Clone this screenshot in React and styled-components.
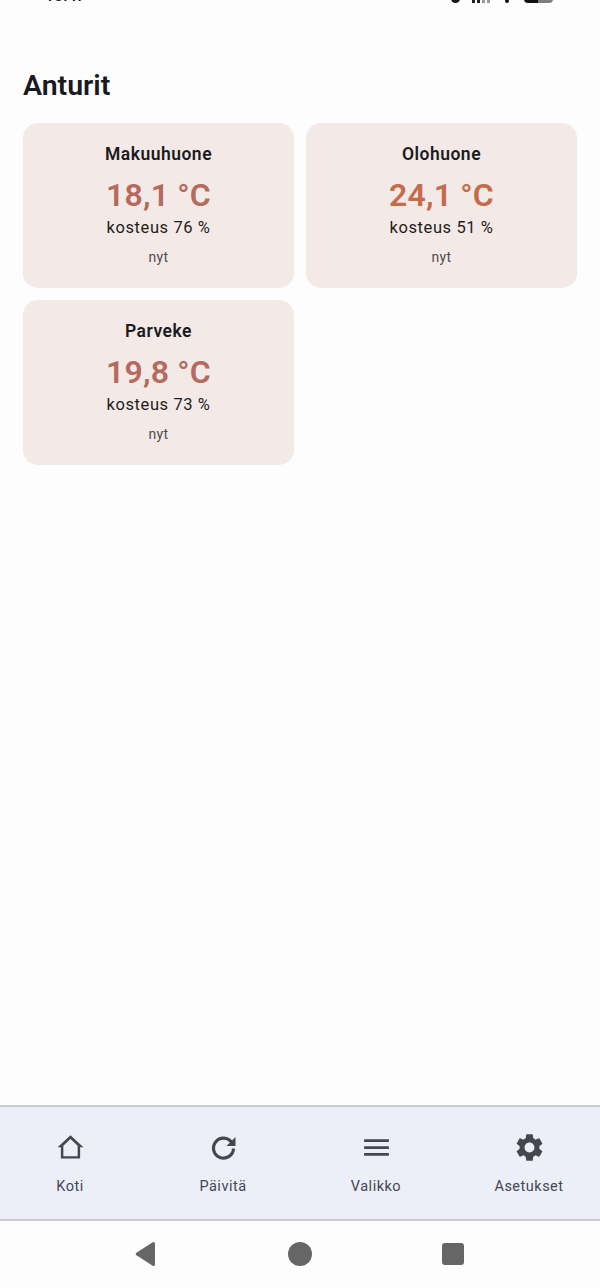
import React from "react";
import styled, { createGlobalStyle } from "styled-components";
import { MdMenu, MdSettings } from "react-icons/md";

const Global = createGlobalStyle`
  html, body { margin: 0; padding: 0; background: #fdfdfe; }
  body { font-family: Roboto, "Liberation Sans", sans-serif; }
`;

const Screen = styled.div`
  width: 600px;
  height: 1288px;
  display: flex;
  flex-direction: column;
  overflow: hidden;
  background: #fdfdfe;
`;

const StatusBar = styled.div`
  height: 3px;
  flex: none;
  overflow: hidden;
  display: flex;
  align-items: flex-end;
  padding: 0 47px 0 45px;
`;

const Clock = styled.span`
  font-size: 16px;
  line-height: 16px;
  font-weight: 500;
  margin-bottom: -1px;
  color: #111;
  margin-right: auto;
`;

const StatusIcons = styled.div`
  display: flex;
  align-items: flex-end;
`;

const Dot = styled.i`
  display: block;
  width: ${(p) => p.$size}px;
  height: ${(p) => p.$size}px;
  border-radius: 50%;
  background: #111;
  margin-right: ${(p) => p.$gap}px;
`;

const Signal = styled.div`
  display: flex;
  gap: 2px;
  margin-right: 15px;
`;

const SignalBar = styled.i`
  display: block;
  width: 3px;
  height: 10px;
  background: ${(p) => (p.$dim ? "#9a9a9a" : "#222")};
`;

const Battery = styled.div`
  width: 29px;
  height: 12px;
  border-radius: 4px;
  background: linear-gradient(90deg, #111 0 14px, #7d7d7d 14px);
`;

const Main = styled.main`
  flex: 1;
  padding: 0 23px;
`;

const Heading = styled.h1`
  margin: 0;
  padding-top: 65px;
  font-size: 28.5px;
  line-height: 36px;
  font-weight: 600;
  color: #181a1f;
`;

const Grid = styled.div`
  display: grid;
  grid-template-columns: 271px 271px;
  grid-auto-rows: 165px;
  gap: 12px;
  margin-top: 19px;
`;

const Card = styled.section`
  background: #f3e9e7;
  border-radius: 15px;
  display: flex;
  flex-direction: column;
  align-items: center;
  padding-top: 20px;
  box-sizing: border-box;
`;

const Room = styled.h2`
  margin: 0;
  font-size: 17.5px;
  line-height: 22px;
  font-weight: 600;
  letter-spacing: 0.5px;
  color: #1b1b1d;
`;

const Temp = styled.div`
  margin-top: 10px;
  font-size: 32px;
  line-height: 40px;
  font-weight: 600;
  letter-spacing: 0.2px;
  color: ${(p) => p.$color};
`;

const Humidity = styled.div`
  margin-top: 2px;
  font-size: 16.5px;
  line-height: 22px;
  letter-spacing: 0.6px;
  color: #1f1c1c;
`;

const Updated = styled.div`
  margin-top: 8px;
  font-size: 14px;
  line-height: 20px;
  letter-spacing: 0.4px;
  color: #524c4c;
`;

const Nav = styled.nav`
  flex: none;
  height: 112px;
  background: #eceef8;
  border-top: 2px solid #c9c9cf;
  border-bottom: 2px solid #c9c9cf;
  display: grid;
  grid-template-columns: 140px 166px 140px 154px;
`;

const NavItem = styled.div`
  display: flex;
  flex-direction: column;
  align-items: center;
  color: #444652;
  padding-top: 24px;

  &:last-child {
    padding-left: 12px;
  }
`;

const IconSlot = styled.div`
  width: 33px;
  height: 33px;
  display: flex;
  align-items: center;
  justify-content: center;
  font-size: 33px;
`;

const NavLabel = styled.span`
  margin-top: 13px;
  font-size: 14.5px;
  line-height: 20px;
  font-weight: 400;
  letter-spacing: 0.5px;
`;

const SystemBar = styled.div`
  flex: none;
  height: 67px;
  box-sizing: border-box;
  display: flex;
  align-items: center;
  justify-content: center;
  gap: 130px;
  color: #666;
  padding: 0 3px 1px 0;
`;

const SysCircle = styled.i`
  display: block;
  width: 24px;
  height: 24px;
  border-radius: 50%;
  background: #666;
`;

const SysSquare = styled.i`
  display: block;
  width: 22px;
  height: 22px;
  border-radius: 3px;
  background: #666;
`;

const HomeIcon = () => (
  <svg width="33" height="33" viewBox="0 0 24 24" fill="currentColor">
    <path fillRule="evenodd" d="M12 3 2.600 11.800H5V20h14v-8.200h2.400L12 3zm0 2.800 5.200 4.900v7.600H6.800v-7.600L12 5.800z" />
  </svg>
);

const RefreshIcon = () => (
  <svg width="33" height="33" viewBox="0 0 33 33" fill="none">
    <path d="M24.800 11.500A10 10 0 1 0 26.500 17.500" stroke="currentColor" strokeWidth="3.200" />
    <path d="M28.500 6v9h-9z" fill="currentColor" />
  </svg>
);

const BackIcon = () => (
  <svg width="24" height="26" viewBox="0 0 24 26" fill="currentColor">
    <path d="M21 2.500v21a1.500 1.500 0 0 1-2.300 1.200L2.500 14.200a1.500 1.500 0 0 1 0-2.400L18.700 1.300A1.500 1.500 0 0 1 21 2.500z" />
  </svg>
);

const sensors = [
  { room: "Makuuhuone", temp: "18,1 °C", humidity: 76, color: "#b56a5d" },
  { room: "Olohuone", temp: "24,1 °C", humidity: 51, color: "#c46b4b" },
  { room: "Parveke", temp: "19,8 °C", humidity: 73, color: "#b56a5d" },
];

const navItems = [
  { label: "Koti", icon: <HomeIcon /> },
  { label: "Päivitä", icon: <RefreshIcon /> },
  { label: "Valikko", icon: <MdMenu /> },
  { label: "Asetukset", icon: <MdSettings /> },
];

export default function App() {
  return (
    <Screen>
      <Global />
      <StatusBar>
        <Clock>18:47</Clock>
        <StatusIcons>
          <Dot $size={9} $gap={12} />
          <Signal>
            <SignalBar />
            <SignalBar />
            <SignalBar $dim />
            <SignalBar $dim />
          </Signal>
          <Dot $size={4} $gap={15} />
          <Battery />
        </StatusIcons>
      </StatusBar>
      <Main>
        <Heading>Anturit</Heading>
        <Grid>
          {sensors.map((s) => (
            <Card key={s.room}>
              <Room>{s.room}</Room>
              <Temp $color={s.color}>{s.temp}</Temp>
              <Humidity>kosteus {s.humidity} %</Humidity>
              <Updated>nyt</Updated>
            </Card>
          ))}
        </Grid>
      </Main>
      <Nav>
        {navItems.map((n) => (
          <NavItem key={n.label}>
            <IconSlot>{n.icon}</IconSlot>
            <NavLabel>{n.label}</NavLabel>
          </NavItem>
        ))}
      </Nav>
      <SystemBar>
        <BackIcon />
        <SysCircle />
        <SysSquare />
      </SystemBar>
    </Screen>
  );
}
